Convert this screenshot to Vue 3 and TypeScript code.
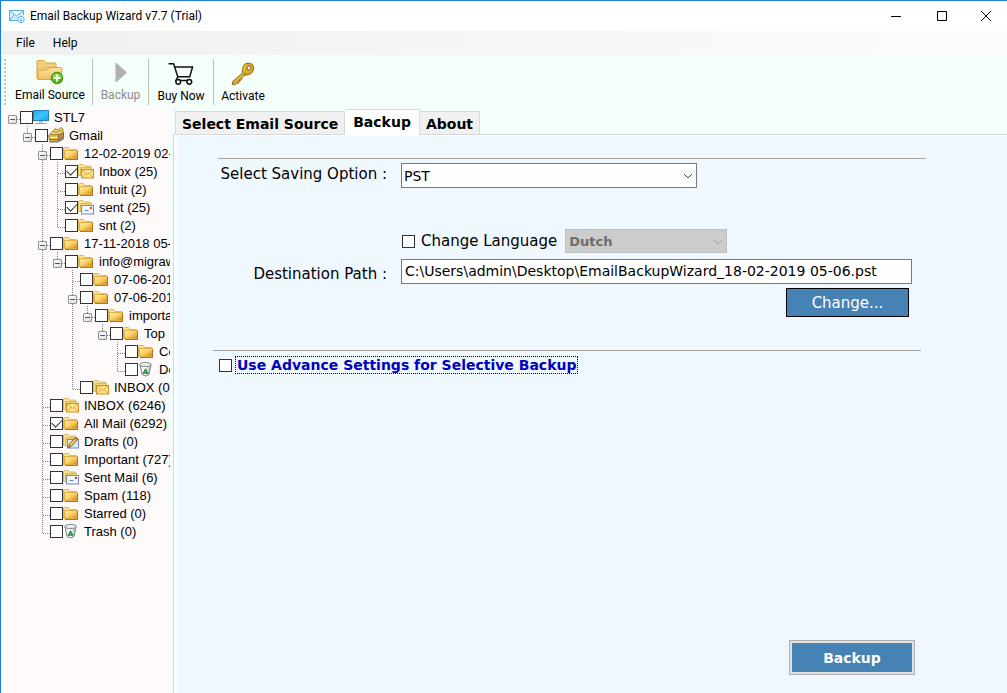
<script setup lang="ts">
import { ref } from 'vue'

type IconKind = 'pc' | 'stack' | 'folder' | 'inbox' | 'sent' | 'drafts' | 'trash'

interface TreeRow {
  label: string
  level: number
  icon: IconKind
  checked: boolean
  open: boolean
  last: boolean
  rails: number[]
}

function row(
  label: string,
  level: number,
  icon: IconKind,
  rails: number[],
  opts: { checked?: boolean; open?: boolean; last?: boolean } = {},
): TreeRow {
  return {
    label,
    level,
    icon,
    rails,
    checked: opts.checked ?? false,
    open: opts.open ?? false,
    last: opts.last ?? false,
  }
}

const rows = ref<TreeRow[]>([
  row('STL7', 0, 'pc', [], { open: true, last: true }),
  row('Gmail', 1, 'stack', [], { open: true, last: true }),
  row('12-02-2019 02-39', 2, 'folder', [], { open: true }),
  row('Inbox (25)', 3, 'inbox', [2], { checked: true }),
  row('Intuit (2)', 3, 'folder', [2]),
  row('sent (25)', 3, 'sent', [2], { checked: true }),
  row('snt (2)', 3, 'folder', [2], { last: true }),
  row('17-11-2018 05-58', 2, 'folder', [], { open: true }),
  row('info@migraware', 3, 'folder', [2], { open: true, last: true }),
  row('07-06-2018', 4, 'folder', [2]),
  row('07-06-2018', 4, 'folder', [2], { open: true }),
  row('important', 5, 'folder', [2, 4], { open: true, last: true }),
  row('Top', 6, 'folder', [2, 4], { open: true, last: true }),
  row('Contacts', 7, 'folder', [2, 4]),
  row('Deleted', 7, 'trash', [2, 4], { last: true }),
  row('INBOX (0)', 4, 'inbox', [2], { last: true }),
  row('INBOX (6246)', 2, 'inbox', []),
  row('All Mail (6292)', 2, 'folder', [], { checked: true }),
  row('Drafts (0)', 2, 'drafts', []),
  row('Important (727)', 2, 'folder', []),
  row('Sent Mail (6)', 2, 'sent', []),
  row('Spam (118)', 2, 'folder', []),
  row('Starred (0)', 2, 'folder', []),
  row('Trash (0)', 2, 'trash', [], { last: true }),
])

const savingOption = ref('PST')
const language = ref('Dutch')
const changeLanguage = ref(false)
const advanced = ref(false)
const path = ref('C:\\Users\\admin\\Desktop\\EmailBackupWizard_18-02-2019 05-06.pst')
</script>

<template>
  <div class="window">
    <svg class="defs" width="0" height="0" aria-hidden="true">
      <defs>
        <linearGradient id="gFolder" x1="0" y1="0" x2="1" y2="1">
          <stop offset="0" stop-color="#fff0a8" />
          <stop offset="0.5" stop-color="#f9cf62" />
          <stop offset="1" stop-color="#d0801a" />
        </linearGradient>
        <linearGradient id="gScreen" x1="0" y1="0" x2="1" y2="1">
          <stop offset="0" stop-color="#19a5ee" />
          <stop offset="0.5" stop-color="#3fc4fb" />
          <stop offset="1" stop-color="#19a5ee" />
        </linearGradient>
        <linearGradient id="gBig" x1="0" y1="0" x2="0" y2="1">
          <stop offset="0" stop-color="#fde3a0" />
          <stop offset="1" stop-color="#f1bd62" />
        </linearGradient>
        <linearGradient id="gBin" x1="0" y1="0" x2="1" y2="0">
          <stop offset="0" stop-color="#e9eef2" />
          <stop offset="0.5" stop-color="#ffffff" />
          <stop offset="1" stop-color="#9fb0bb" />
        </linearGradient>
      </defs>
    </svg>

    <header class="titlebar">
      <svg class="app-icon" width="16" height="16" viewBox="0 0 16 16" fill="none" stroke="#55aee6">
        <path d="M8.5 12.5H.5V2.500H14.500V7M.8 2.800L7.500 8L14.200 2.800M.8 12.200L5 7" fill="#d3ecfb" />
        <circle cx="12" cy="11.500" r="3.200" fill="#fff" />
        <path d="M12 9.500V13M10.700 12L12 13.300L13.300 12" />
      </svg>
      <h1 class="title">Email Backup Wizard v7.7 (Trial)</h1>
      <div class="caption-buttons">
        <button type="button" aria-label="Minimize">
          <svg width="12" height="12" stroke="#000" fill="none"><path d="M1 6.500H11" /></svg>
        </button>
        <button type="button" aria-label="Maximize">
          <svg width="12" height="12" stroke="#000" fill="none"><path d="M1.500 1.500H10.500V10.500H1.500Z" /></svg>
        </button>
        <button type="button" aria-label="Close">
          <svg width="12" height="12" stroke="#000" fill="none"><path d="M1 1L11 11M11 1L1 11" /></svg>
        </button>
      </div>
    </header>

    <nav class="menubar">
      <button type="button">File</button>
      <button type="button">Help</button>
    </nav>

    <div class="toolbar">
      <span class="grip"></span>
      <button type="button" class="tool source">
        <svg width="28" height="26" viewBox="0 0 28 26">
          <path d="M1 20V2.500Q1 1.500 2 1.500H8L10.500 4H19Q20 4 20 5V9H9Z" fill="#f3cd7c" stroke="#dca23e" />
          <path d="M2 20.500V12Q2 11 3 11H11L13.500 8.500H24.500Q26.500 8.500 26.200 10L23.800 20.500Z" fill="url(#gBig)" stroke="#dca23e" />
          <circle cx="21" cy="19" r="5.800" fill="#55b51a" stroke="#3f950d" />
          <path d="M16.500 18A4.700 4.700 0 0 1 25.500 18Z" fill="#8fdb4f" />
          <path d="M21 15.500V22.500M17.500 19H24.500" stroke="#fff" stroke-width="2" />
        </svg>
        <span>Email Source</span>
      </button>
      <span class="divider"></span>
      <button type="button" class="tool backup" disabled>
        <svg width="14" height="26" viewBox="0 0 14 26">
          <path d="M2 4L12.500 13.500L2 23Z" fill="#b1b1b1" stroke="#b1b1b1" stroke-linejoin="round" />
        </svg>
        <span>Backup</span>
      </button>
      <span class="divider"></span>
      <button type="button" class="tool buy">
        <svg width="28" height="26" viewBox="0 0 28 26" fill="none" stroke="#111" stroke-width="1.600">
          <path d="M.5 2H6L10.500 16H23.500L26.500 5.500H7.200" />
          <path d="M10.500 16L8.500 20H24.500" />
          <circle cx="11" cy="21.500" r="2.600" fill="#f5fffa" />
          <circle cx="23" cy="21.500" r="2.600" fill="#f5fffa" />
        </svg>
        <span>Buy Now</span>
      </button>
      <span class="divider"></span>
      <button type="button" class="tool activate">
        <svg width="26" height="26" viewBox="0 0 26 26">
          <path d="M13.500 11L1.500 21.500V24.500H4.500L6 22.500L7.500 23.500L9 21.500L8.500 19.500L10.500 20L12 18L11.500 16.500L16.500 13.500Z" fill="#d3a422" stroke="#8a6410" stroke-linejoin="round" />
          <path d="M16 1.500Q20 .5 23 2.500Q25.500 5 24.500 8.500Q23 13 18.500 14Q14 14.500 12.500 11Q11.500 5 16 1.500Z" fill="#d8a922" stroke="#8a6410" />
          <path d="M14 9.500Q13.500 5 17 3" fill="none" stroke="#f6db78" />
          <circle cx="19.500" cy="6.500" r="2.200" fill="#fff" stroke="#7d5a10" />
          <path d="M3.500 22L14 12.700" stroke="#f2d26a" />
        </svg>
        <span>Activate</span>
      </button>
    </div>

    <div class="body">
      <aside class="sidebar">
        <ul class="tree">
          <li v-for="(r, i) in rows" :key="i" class="node">
            <svg v-for="n in r.level" :key="n" class="cell" width="15" height="18">
              <path v-if="r.rails.includes(n - 1)" class="dots" d="M7.500 0V18" />
            </svg>
            <span class="joint">
              <svg class="cell" width="15" height="18">
                <path v-if="r.level > 0" class="dots" :d="r.last ? 'M7.500 0V11' : 'M7.500 0V18'" />
                <path class="dots" d="M8 11.500H15" />
              </svg>
              <button v-if="r.open" type="button" class="expander" :aria-label="'Collapse ' + r.label"></button>
            </span>
            <label class="item">
              <input v-model="r.checked" type="checkbox" class="tick" />
              <svg class="icon" width="16" height="16" viewBox="0 0 16 16">
                <template v-if="r.icon === 'pc'">
                  <rect x="0.500" y="1.500" width="15" height="10" fill="url(#gScreen)" stroke="#2585b8" />
                  <path d="M6 12H10V13.500H6Z" fill="#a8bcc8" />
                  <path d="M2.500 14.500H13.500" stroke="#8fa3af" />
                </template>
                <template v-else-if="r.icon === 'stack'">
                  <path d="M5 5L7 1.500L10 3L13 .5L15 2V7L8 9Z" fill="#f1cf6a" stroke="#b08a30" />
                  <path d="M2 8L4 4.500L8 5.500L13.500 3.500L15.500 5V11L10 13Z" fill="#fbe79c" stroke="#b08a30" />
                  <path d="M.5 8.500L2.500 7L6 8L10.500 7V14L2 14.500Z" fill="#e9bb4c" stroke="#8b7037" />
                  <path d="M10.500 14V7.500L15.500 5.500V11.500Z" fill="#c7902d" stroke="#8b7037" />
                  <path d="M2 10.500H9.500" stroke="#fff4bd" />
                  <path d="M1.500 12.500H10M11 12.500L15.500 9.500M1.500 15H10L15.500 12" fill="none" stroke="#62798f" />
                </template>
                <template v-else-if="r.icon === 'trash'">
                  <path d="M2 3.500L4 13.500Q7.500 16.500 11 13.500L13 3.500Z" fill="url(#gBin)" stroke="#75828a" />
                  <ellipse cx="7.500" cy="3.500" rx="5.800" ry="2" fill="#eef2f4" stroke="#75828a" />
                  <path d="M5.500 12L7.500 8.500L9.500 12Z" fill="none" stroke="#148a2c" stroke-width="1.400" />
                </template>
                <template v-else>
                  <template v-if="r.icon === 'folder'">
                    <path d="M.5 13.500V3.500L1.500 2.500H5.500L7 4.500H13.500V13.500Z" fill="#f9e08c" stroke="#dab85e" />
                    <path d="M1.500 5.500H14.500V13.500H1.500Z" fill="url(#gFolder)" stroke="#e3ac45" />
                    <path d="M2 14.500H15M14.500 6V14" fill="none" stroke="#b3761c" />
                  </template>
                  <template v-else>
                    <path d="M.5 12.500V2.500L1.500 1.500H5L6.500 3H12.500V12.500Z" fill="#f9e49a" stroke="#dab85e" />
                    <path d="M2.500 4.500H13.500V12.500H2.500Z" fill="#f6d675" stroke="#dfb854" />
                  </template>
                  <template v-if="r.icon === 'inbox'">
                    <rect x="3.500" y="6.500" width="12" height="8.500" fill="#fde58d" stroke="#cf8c20" />
                    <path d="M3.500 6.500L9.500 11.500L15.500 6.500M3.500 15L8 10.500M15.500 15L11 10.500" fill="none" stroke="#dda03a" />
                  </template>
                  <template v-if="r.icon === 'sent'">
                    <rect x="3.500" y="6.500" width="12" height="8.500" fill="#f3f7ff" stroke="#7089b8" />
                    <path d="M6.500 11.500H10.500" stroke="#6f87b5" />
                    <rect x="12" y="8" width="2" height="2" fill="#d7392b" />
                  </template>
                  <template v-if="r.icon === 'drafts'">
                    <rect x="4.500" y="6.500" width="11" height="8.500" fill="#e1ebfb" stroke="#7089b8" />
                    <path d="M5.500 14.500L6.500 11L12.500 4.500L14.500 6.500L8.500 13Z" fill="#f8d152" stroke="#705420" />
                    <path d="M12.500 4.500L14.500 6.500" stroke="#d65a43" stroke-width="2" />
                  </template>
                </template>
              </svg>
              <span class="text">{{ r.label }}</span>
            </label>
          </li>
        </ul>
      </aside>

      <main class="main">
        <div class="tabs" role="tablist">
          <button type="button" role="tab" class="tab first">Select Email Source</button>
          <button type="button" role="tab" class="tab active" aria-selected="true">Backup</button>
          <button type="button" role="tab" class="tab">About</button>
        </div>
        <section class="panel">
          <hr class="rule" />
          <div class="form">
            <label class="name" for="saving">Select Saving Option :</label>
            <div class="combo saving">
              <select id="saving" v-model="savingOption">
                <option>PST</option>
                <option>MSG</option>
                <option>EML</option>
              </select>
              <svg class="chevron" width="10" height="6"><path d="M1 1L5 5L9 1" /></svg>
            </div>

            <div class="language">
              <label class="check">
                <input v-model="changeLanguage" type="checkbox" class="tick" />
                <span>Change Language</span>
              </label>
              <div class="combo dutch">
                <select v-model="language" :disabled="!changeLanguage" aria-label="Language">
                  <option>Dutch</option>
                  <option>English</option>
                </select>
                <svg class="chevron" width="10" height="6"><path d="M1 1L5 5L9 1" /></svg>
              </div>
            </div>

            <label class="name dest" for="path">Destination Path :</label>
            <input id="path" v-model="path" type="text" class="path" />
            <button type="button" class="change">Change...</button>
          </div>
          <hr class="rule second" />
          <label class="advanced">
            <input v-model="advanced" type="checkbox" class="tick" />
            <span>Use Advance Settings for Selective Backup</span>
          </label>
          <button type="button" class="run">Backup</button>
        </section>
      </main>
    </div>
  </div>
</template>

<style>
body {
  margin: 0;
}
</style>

<style scoped>
* {
  box-sizing: border-box;
}
.window {
  display: flex;
  flex-direction: column;
  min-height: 100vh;
  border-top: 1px solid #1a80d4;
  border-left: 1px solid #1a80d4;
  background: #f5fffa;
  color: #000;
  font-family: Roboto, "Open Sans", sans-serif;
  font-size: 12px;
}
.defs {
  position: absolute;
}
button,
input,
select {
  margin: 0;
  padding: 0;
  border: 0;
  border-radius: 0;
  background: none;
  color: inherit;
  font: inherit;
}
.titlebar {
  display: flex;
  align-items: center;
  height: 30px;
  padding-left: 8px;
  background: #fff;
}
.title {
  margin: 0 0 0 5px;
  font-size: 12px;
  font-weight: 400;
}
.caption-buttons {
  display: flex;
  margin-left: auto;
}
.caption-buttons button {
  display: grid;
  place-items: center;
  width: 46px;
  height: 28px;
}
.caption-buttons button:last-child {
  width: 42px;
}
.menubar {
  display: flex;
  gap: 18px;
  height: 24px;
  padding-left: 15px;
  background: linear-gradient(to right, #f0f0f0, #fcfcfc);
}
.toolbar {
  display: flex;
  height: 53px;
  padding: 4px 0 3px 3px;
}
.grip {
  width: 2px;
  margin-right: 9px;
  background: repeating-linear-gradient(#b9c2be 0 2px, transparent 2px 4px);
}
.tool {
  display: flex;
  flex-direction: column;
  align-items: center;
  gap: 1px;
  width: 70px;
  line-height: 18px;
  white-space: nowrap;
}
.tool.backup {
  width: 55px;
  color: #8b8b8b;
}
.tool.buy {
  width: 64px;
}
.tool.buy svg,
.tool.activate svg {
  margin-top: 3px;
}
.tool.activate {
  width: 58px;
}
.divider {
  width: 1px;
  background: #bdbdbd;
}
.tool.source + .divider {
  margin-left: 7px;
}
.body {
  display: flex;
  flex: 1;
}
.sidebar {
  width: 172px;
  padding-right: 3px;
  background: #f0ffff;
  flex: none;
}
.tree {
  height: 100%;
  margin: 0;
  padding: 0 0 0 4px;
  overflow: hidden;
  list-style: none;
  background: #fffafa;
  font-family: "Liberation Sans", Arial, sans-serif;
  font-size: 13px;
}
.node {
  display: flex;
  height: 18px;
}
.cell {
  display: block;
  flex: none;
}
.dots {
  fill: none;
  stroke: #808080;
  stroke-dasharray: 1 1;
}
.joint {
  display: grid;
  flex: none;
}
.joint > * {
  grid-area: 1 / 1;
}
.expander {
  display: grid;
  place-items: center;
  width: 9px;
  height: 9px;
  margin: 7px 0 0 3px;
  border: 1px solid #919191;
  border-radius: 1px;
  background: linear-gradient(135deg, #fff, #dcdcdc);
}
.expander::before {
  content: "";
  width: 5px;
  height: 1px;
  background: #3a58a8;
}
.item {
  display: flex;
  align-items: center;
  flex: none;
}
.item .text {
  padding-top: 2px;
  margin-left: 5px;
  line-height: 18px;
  white-space: nowrap;
}
.item .icon {
  flex: none;
}
.tick {
  display: grid;
  place-items: center;
  flex: none;
  width: 13px;
  height: 13px;
  border: 1px solid #333;
  background: #fff;
  appearance: none;
}
.tick:checked::before {
  content: "";
  width: 9px;
  height: 5px;
  margin-bottom: 3px;
  border: solid #333;
  border-width: 0 0 1px 1px;
  transform: rotate(-45deg);
}
.main {
  display: flex;
  flex: 1;
  flex-direction: column;
  min-width: 0;
  font-family: Verdana, "DejaVu Sans", sans-serif;
  font-size: 15px;
}
.tabs {
  display: flex;
  align-items: flex-end;
  height: 26px;
  padding-left: 2px;
}
.tab {
  height: 23px;
  padding: 1px 6px 0;
  border: 1px solid #d9d9d9;
  border-bottom: 0;
  border-left-width: 0;
  background: #f0f0f0;
  font-size: 14px;
  font-weight: 700;
  white-space: nowrap;
}
.tab.first {
  border-left-width: 1px;
}
.tab.active {
  height: 26px;
  margin-bottom: -1px;
  padding: 0 8px 2px;
  background: #fff;
  z-index: 1;
}
.panel {
  display: flex;
  flex: 1;
  flex-direction: column;
  padding: 21px 0 18px;
  border: 1px solid #d9d9d9;
  border-width: 1px 0 0 1px;
  background: #f0f8ff;
  box-shadow: inset 3px 1px #fff;
}
.rule {
  width: auto;
  height: 1px;
  margin: 2px 81px 4px 44px;
  border: 0;
  background: #a0a0a0;
}
.rule.second {
  margin: 33px 86px 5px 39px;
}
.form {
  display: grid;
  grid-template-columns: 213px 1fr;
  column-gap: 14px;
  padding-right: 95px;
}
.name {
  justify-self: end;
  line-height: 22px;
  white-space: nowrap;
}
.combo {
  position: relative;
}
.combo select {
  width: 100%;
  height: 100%;
  padding-left: 2px;
  border: 1px solid #7a7a7a;
  background: #fff;
  appearance: none;
}
.chevron {
  position: absolute;
  top: 10px;
  right: 4px;
  fill: none;
  stroke: #444;
  pointer-events: none;
}
.saving {
  width: 296px;
  height: 25px;
  font-size: 14px;
}
.language {
  display: flex;
  grid-column: 2;
  gap: 8px;
  margin: 41px 0 6px;
}
.check {
  display: flex;
  align-items: center;
  gap: 6px;
  padding-left: 1px;
  white-space: nowrap;
}
.dutch {
  width: 162px;
  height: 24px;
  font-size: 13px;
  font-weight: 700;
}
.dutch select {
  padding-left: 3px;
}
.dutch select:disabled {
  border-color: #bfbfbf;
  background: #ccc;
  color: #6d6d6d;
  opacity: 1;
}
.dutch .chevron {
  stroke: #a0a0a0;
}
.dest {
  padding-top: 4px;
}
.path {
  height: 25px;
  padding: 0 3px 1px;
  border: 1px solid #7a7a7a;
  background: #fff;
  font-size: 14px;
}
.change {
  grid-column: 2;
  justify-self: end;
  width: 123px;
  height: 29px;
  margin: 3px 3px 0 0;
  border: 1px solid #000;
  background: #4682b4;
  color: #fff;
}
.advanced {
  display: flex;
  align-items: center;
  align-self: flex-start;
  gap: 3px;
  margin-left: 45px;
  color: #0000c0;
  font-size: 14px;
  font-weight: 700;
}
.advanced span {
  padding: 0 2px;
  outline: 1px dotted #000;
  outline-offset: -1px;
  line-height: 18px;
  white-space: nowrap;
}
.run {
  align-self: flex-end;
  width: 126px;
  height: 35px;
  margin: auto 92px 0 0;
  border: 1px solid #adadad;
  background: #4682b4;
  box-shadow: inset 0 0 0 2px #e1e1e1;
  color: #fff;
  font-size: 14px;
  font-weight: 700;
}
</style>
